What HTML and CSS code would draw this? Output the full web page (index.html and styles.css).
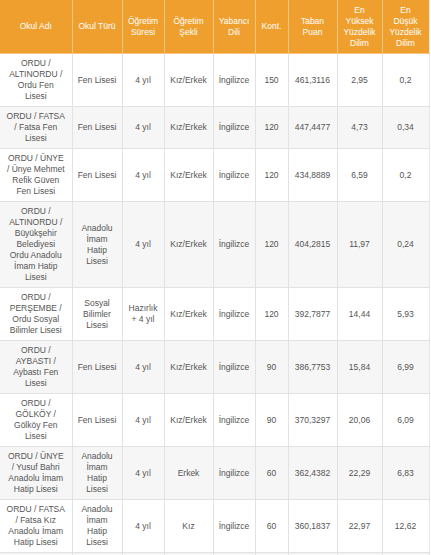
FILE: index.html
```html
<!DOCTYPE html>
<html lang="tr">
<head>
<meta charset="utf-8">
<title>Ordu Liseleri</title>
<link rel="stylesheet" href="styles.css">
</head>
<body>
<table class="scores">
  <colgroup>
    <col class="c-name"><col class="c-type"><col class="c-dur"><col class="c-form"><col class="c-lang"><col class="c-quota"><col class="c-score"><col class="c-hi"><col class="c-lo">
  </colgroup>
  <thead>
    <tr>
      <th>Okul Adı</th><th>Okul Türü</th><th>Öğretim Süresi</th><th>Öğretim Şekli</th><th>Yabancı Dili</th><th>Kont.</th><th>Taban Puan</th><th>En Yüksek Yüzdelik Dilim</th><th>En Düşük Yüzdelik Dilim</th>
    </tr>
  </thead>
  <tbody>
    <tr><td>ORDU / ALTINORDU / Ordu Fen Lisesi</td><td>Fen Lisesi</td><td>4 yıl</td><td>Kız/Erkek</td><td>İngilizce</td><td>150</td><td>461,3116</td><td>2,95</td><td>0,2</td></tr>
    <tr><td>ORDU / FATSA / Fatsa Fen Lisesi</td><td>Fen Lisesi</td><td>4 yıl</td><td>Kız/Erkek</td><td>İngilizce</td><td>120</td><td>447,4477</td><td>4,73</td><td>0,34</td></tr>
    <tr><td>ORDU / ÜNYE / Ünye Mehmet Refik Güven Fen Lisesi</td><td>Fen Lisesi</td><td>4 yıl</td><td>Kız/Erkek</td><td>İngilizce</td><td>120</td><td>434,8889</td><td>6,59</td><td>0,2</td></tr>
    <tr><td>ORDU / ALTINORDU / Büyükşehir Belediyesi Ordu Anadolu İmam Hatip Lisesi</td><td>Anadolu İmam Hatip Lisesi</td><td>4 yıl</td><td>Kız/Erkek</td><td>İngilizce</td><td>120</td><td>404,2815</td><td>11,97</td><td>0,24</td></tr>
    <tr><td>ORDU / PERŞEMBE / Ordu Sosyal Bilimler Lisesi</td><td>Sosyal Bilimler Lisesi</td><td>Hazırlık + 4 yıl</td><td>Kız/Erkek</td><td>İngilizce</td><td>120</td><td>392,7877</td><td>14,44</td><td>5,93</td></tr>
    <tr><td>ORDU / AYBASTI / Aybastı Fen Lisesi</td><td>Fen Lisesi</td><td>4 yıl</td><td>Kız/Erkek</td><td>İngilizce</td><td>90</td><td>386,7753</td><td>15,84</td><td>6,99</td></tr>
    <tr><td>ORDU / GÖLKÖY / Gölköy Fen Lisesi</td><td>Fen Lisesi</td><td>4 yıl</td><td>Kız/Erkek</td><td>İngilizce</td><td>90</td><td>370,3297</td><td>20,06</td><td>6,09</td></tr>
    <tr><td>ORDU / ÜNYE / Yusuf Bahri Anadolu İmam Hatip Lisesi</td><td>Anadolu İmam Hatip Lisesi</td><td>4 yıl</td><td>Erkek</td><td>İngilizce</td><td>60</td><td>362,4382</td><td>22,29</td><td>6,83</td></tr>
    <tr><td>ORDU / FATSA / Fatsa Kız Anadolu İmam Hatip Lisesi</td><td>Anadolu İmam Hatip Lisesi</td><td>4 yıl</td><td>Kız</td><td>İngilizce</td><td>60</td><td>360,1837</td><td>22,97</td><td>12,62</td></tr>
    <tr><td>ORDU / ÜNYE / Ünye Anadolu Lisesi</td><td>Anadolu Lisesi</td><td>4 yıl</td><td>Kız/Erkek</td><td>İngilizce</td><td>150</td><td>355,1204</td><td>24,10</td><td>14,05</td></tr>
  </tbody>
</table>
</body>
</html>
```

FILE: styles.css
```css
html, body {
  margin: 0;
  padding: 0;
  background: #ffffff;
}

body {
  font-family: "Liberation Sans", Arial, sans-serif;
  font-size: 8.5px;
  color: #555555;
}

.scores {
  width: 429px;
  table-layout: fixed;
  border-collapse: collapse;
}

.c-name { width: 72px; }
.c-type { width: 50px; }
.c-dur { width: 42px; }
.c-form { width: 49px; }
.c-lang { width: 42px; }
.c-quota { width: 33px; }
.c-score { width: 49px; }
.c-hi { width: 45px; }
.c-lo { width: 47px; }

.scores th,
.scores td {
  padding: 4px 5px;
  line-height: 11px;
  text-align: center;
  vertical-align: middle;
  font-weight: normal;
  word-wrap: break-word;
}

.scores th:first-child,
.scores td:first-child,
.scores th:last-child,
.scores td:last-child {
  padding-left: 6px;
  padding-right: 6px;
}

.scores th {
  background: #ef9f2e;
  color: #ffffff;
  border: 1px solid #f6c57e;
  border-top: none;
  height: 45px;
}

.scores th:first-child,
.scores td:first-child {
  border-left: none;
}

.scores td {
  border: 1px solid #e2e2e2;
}

.scores th:last-child,
.scores td:last-child {
  border-right: 1px solid #e6e6e6;
}

.scores tbody tr:nth-child(even) td {
  background: #f6f6f6;
}
```
